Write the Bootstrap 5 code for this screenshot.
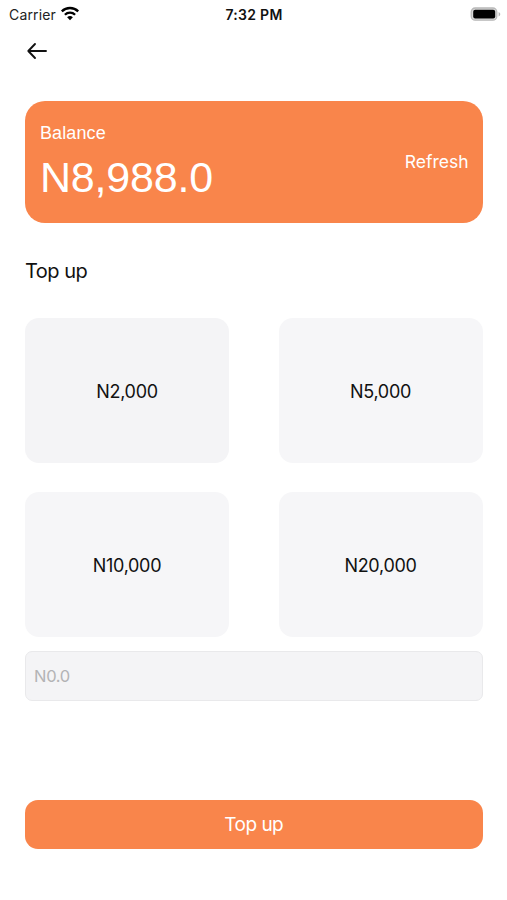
<!DOCTYPE html>
<html lang="en">
<head>
<meta charset="utf-8">
<meta name="viewport" content="width=device-width, initial-scale=1">
<title>Top up</title>
<link href="https://cdn.jsdelivr.net/npm/bootstrap@5.3.0/dist/css/bootstrap.min.css" rel="stylesheet">
<style>
  body { font-family: Inter, sans-serif; color: #111; height: 900px; overflow: hidden; }
  .status-bar { height: 28px; padding: 0 6px 0 9px; }
  .carrier { font-size: 14px; letter-spacing: .15px; color: #222; }
  .wifi { margin-bottom: 2px; }
  .clock { font-size: 14px; font-weight: 600; letter-spacing: .3px; margin-right: 2px; }
  .side { flex: 1 1 0; }
  .back-row { height: 73px; padding: 14px 0 0 26px; }
  .screen { padding: 0 24.5px 0 25px; }
  .balance-panel { height: 122px; border-radius: 20px; background: #f9854b; padding: 0 14px 0 15px; }
  .balance-text { font-family: "Liberation Sans", Arial, sans-serif; }
  .balance-label { font-size: 18px; line-height: 22px; padding-top: 1px; letter-spacing: .1px; }
  .balance-amount { font-size: 43px; line-height: 48px; margin: 9px 0 2px; letter-spacing: -.2px; }
  .refresh { font-size: 17.5px; padding-top: 1px; }
  .heading { font-size: 20px; line-height: 24px; margin: 36px 0 35px; letter-spacing: -.5px; }
  .amounts { display: grid; grid-template-columns: 204px 204px; justify-content: space-between; row-gap: 29px; }
  .amount { height: 145px; border-radius: 14px; background: #f6f6f8; font-size: 18px; letter-spacing: -.3px; border: 0; padding: 2px 0 0; color: #111; }
  .amount.chosen { background: #f4f4f6; }
  .amount-input, .amount-input:focus { height: 50px; margin-top: 14px; border-radius: 7px; border: 1px solid #e9e9eb; background: #f4f4f6; font-size: 16.5px; padding: 0 8px; letter-spacing: -.3px; }
  .amount-input::placeholder { color: #b3b3b5; opacity: 1; }
  .submit, .submit:hover { height: 49px; margin-top: 99px; border-radius: 13px; background: #f9854b; color: #fff; font-size: 19px; letter-spacing: -.5px; padding: 2px 0 0; }
</style>
<script src="https://cdn.jsdelivr.net/npm/bootstrap@5.3.0/dist/js/bootstrap.bundle.min.js"></script>
</head>
<body class="bg-white">
<header>
  <div class="status-bar d-flex align-items-center">
    <div class="side d-flex align-items-center gap-1">
      <span class="carrier">Carrier</span>
      <svg class="wifi" width="20" height="15" viewBox="0 0 20 15" fill="none" stroke="#000" stroke-width="2.3" aria-hidden="true">
        <path d="M1.8 5.4a11.6 11.6 0 0 1 16.4 0M4.9 8.7a7.2 7.2 0 0 1 10.2 0"/>
        <path d="M10 14.3 7.1 11.3a4.2 4.2 0 0 1 5.8 0z" fill="#000" stroke="none"/>
      </svg>
    </div>
    <span class="clock">7:32 PM</span>
    <div class="side d-flex justify-content-end">
      <svg width="31" height="15" viewBox="0 0 31 15" aria-hidden="true">
        <rect x="1.2" y="1" width="25.6" height="12.2" rx="4" fill="#d8d8d8" stroke="#b8b8b8" stroke-width="1.3"/>
        <rect x="3.2" y="2.8" width="22" height="8.8" rx="2" fill="#000"/>
        <path d="M28.6 5c2.2.8 2.2 3.6 0 4.4z" fill="#b5b5b5"/>
      </svg>
    </div>
  </div>
  <div class="back-row">
    <svg class="d-block" width="22" height="18" viewBox="0 0 22 18" fill="none" stroke="#111" stroke-width="1.9" stroke-linecap="round" stroke-linejoin="round" aria-hidden="true">
      <path d="M20 9H2.3M9 2 2.3 9 9 16"/>
    </svg>
  </div>
</header>
<main class="screen">
  <section class="balance-panel text-white d-flex align-items-center justify-content-between">
    <div class="balance-text">
      <div class="balance-label">Balance</div>
      <div class="balance-amount">N8,988.0</div>
    </div>
    <span class="refresh">Refresh</span>
  </section>
  <h1 class="heading fw-normal">Top up</h1>
  <div class="amounts">
    <button class="amount chosen">N2,000</button>
    <button class="amount">N5,000</button>
    <button class="amount">N10,000</button>
    <button class="amount">N20,000</button>
  </div>
  <input class="amount-input form-control" type="text" placeholder="N0.0" aria-label="Amount">
  <button class="submit btn border-0 w-100">Top up</button>
</main>
</body>
</html>
